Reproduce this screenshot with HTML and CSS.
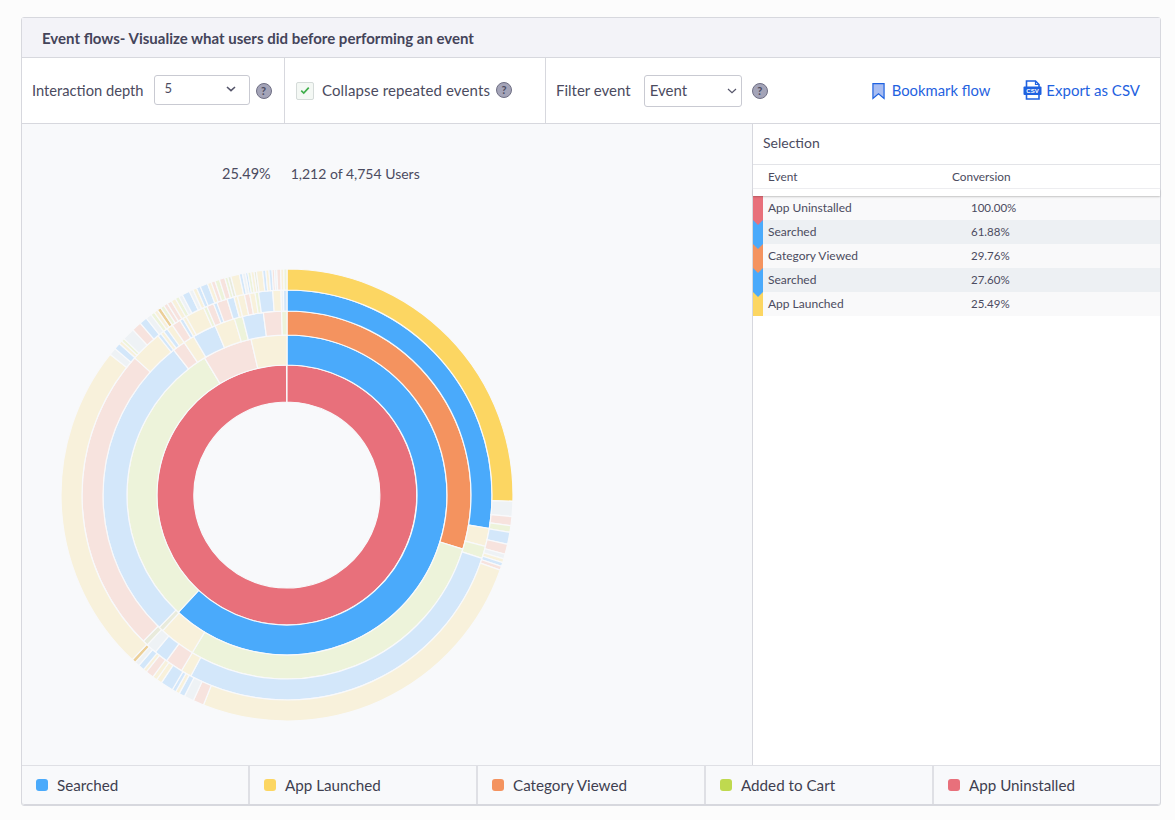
FILE: index.html
```html
<!DOCTYPE html>
<html lang="en">
<head>
<meta charset="utf-8">
<title>Event flows</title>
<link rel="stylesheet" href="styles.css">
</head>
<body>
<main class="panel">
  <h1 class="title">Event flows- Visualize what users did before performing an event</h1>
  <section class="toolbar">
    <div class="tool tool-depth">
      <span class="label label-depth">Interaction depth</span>
      <div class="select select-depth"><span class="select-value">5</span>
        <svg class="chev chev-bold" viewBox="0 0 10 6"><path d="M1 1l4 3.6L9 1"/></svg></div>
      <span class="help">?</span>
    </div>
    <div class="tool tool-collapse">
      <span class="check"><svg viewBox="0 0 12 10"><path d="M1.5 5.2l3 3L10.5 1.6"/></svg></span>
      <span class="label label-collapse">Collapse repeated events</span>
      <span class="help">?</span>
    </div>
    <div class="tool tool-filter">
      <span class="label">Filter event</span>
      <div class="select select-event"><span class="label">Event</span>
        <svg class="chev" viewBox="0 0 10 6"><path d="M1 1l4 3.6L9 1"/></svg></div>
      <span class="help">?</span>
      <span class="actions">
        <a class="action action-bookmark">
          <svg class="bookmark" viewBox="0 0 14 18"><path d="M1 1h12v16l-6-5-6 5z"/></svg>Bookmark flow</a>
        <a class="action action-export">
          <svg class="csv" viewBox="0 0 18 20">
            <path class="csv-page" d="M3 1h9l3.500 3.500V19H3z"/>
            <path class="csv-fold" d="M12 1v3.500h3.500"/>
            <rect class="csv-band" x="0" y="6.500" width="18" height="8.500" rx="1"/>
            <text class="csv-text" x="9" y="13">CSV</text>
          </svg>Export as CSV</a>
      </span>
    </div>
  </section>
  <section class="content">
    <div class="chart">
      <p class="stats"><span class="stat-pct">25.49%</span><span>1,212 of 4,754 Users</span></p>
      <svg id="sunburst" class="sunburst" viewBox="0 0 460 460" width="460" height="460"></svg>
    </div>
    <aside class="selection">
      <div class="selection-title">Selection</div>
      <div class="table-head"><span class="col-event">Event</span><span class="col-conv">Conversion</span></div>
      <div class="shadow-strip"></div>
      <ul class="rows">
        <li class="row"><i class="mark mark-red"></i><span class="col-event">App Uninstalled</span><span class="col-val">100.00%</span></li>
        <li class="row"><i class="mark mark-blue"></i><span class="col-event">Searched</span><span class="col-val">61.88%</span></li>
        <li class="row"><i class="mark mark-orange"></i><span class="col-event">Category Viewed</span><span class="col-val">29.76%</span></li>
        <li class="row"><i class="mark mark-blue"></i><span class="col-event">Searched</span><span class="col-val">27.60%</span></li>
        <li class="row"><i class="mark mark-yellow"></i><span class="col-event">App Launched</span><span class="col-val">25.49%</span></li>
      </ul>
    </aside>
  </section>
  <footer class="legend">
    <div class="legend-item"><i class="dot mark-blue"></i>Searched</div>
    <div class="legend-item"><i class="dot mark-yellow"></i>App Launched</div>
    <div class="legend-item"><i class="dot mark-orange"></i>Category Viewed</div>
    <div class="legend-item"><i class="dot mark-green"></i>Added to Cart</div>
    <div class="legend-item"><i class="dot mark-red"></i>App Uninstalled</div>
  </footer>
</main>
<script src="sunburst.js"></script>
</body>
</html>
```
FILE: styles.css
```css
* { box-sizing: border-box; }
html, body { margin: 0; }
body {
  background: #fcfcfc;
  font-family: "Lato", "Liberation Sans", sans-serif;
  color: #4b4b60;
  padding: 17px 14px 0 21px;
  height: 820px;
  overflow: hidden;
}
.panel {
  width: 1140px;
  height: 789px;
  border: 1px solid #d7d8de;
  border-radius: 3px;
  background: #fff;
  display: flex;
  flex-direction: column;
}
.title {
  margin: 0;
  height: 40px;
  padding-left: 20px;
  background: #f3f3f8;
  border-bottom: 1px solid #d7d8de;
  font-size: 15px;
  font-weight: 700;
  line-height: 41px;
  color: #44445a;
}
.toolbar {
  display: flex;
  height: 66px;
  border-bottom: 1px solid #d7d8de;
  flex: none;
}
.tool { display: flex; align-items: center; font-size: 15px; }
.tool-depth { width: 263px; padding-left: 10px; border-right: 1px solid #d7d8de; }
.tool-collapse { width: 261px; padding-left: 11px; border-right: 1px solid #d7d8de; }
.tool-filter { flex: 1; padding-left: 10px; }
.label { margin-top: -2px; }
.label-depth { font-size: 14.700px; }
.label-collapse { letter-spacing: .12px; }
.select {
  display: flex;
  align-items: center;
  justify-content: space-between;
  background: #fff;
  border: 1px solid #c9cad2;
  border-radius: 3px;
  margin-left: 10px;
  height: 30px;
}
.select-depth { width: 96px; padding: 0 13px 0 10px; font-size: 13px; margin-top: -2px; }
.select-depth .select-value { margin-top: -3px; }
.select-event { width: 98px; height: 32px; padding: 0 4px 0 5px; margin-left: 13px; }
.chev { width: 10px; height: 6px; fill: none; stroke: #55556a; stroke-width: 1.2; }
.chev-bold { stroke-width: 1.6; margin-top: -2px; }
.help {
  width: 16px;
  height: 16px;
  border-radius: 50%;
  background: #a4a4b8;
  border: 1px solid #6f6f84;
  color: #4b4b60;
  font-size: 11px;
  font-weight: 700;
  line-height: 14px;
  text-align: center;
  margin-left: 6px;
  flex: none;
}
.tool-filter .help { margin-left: 10px; }
.tool-collapse .help { margin-top: -2px; }
.check {
  width: 18px;
  height: 18px;
  margin-right: 8px;
  border: 1px solid #d5dbd9;
  border-radius: 2px;
  background: #f4f8f4;
  display: flex;
  align-items: center;
  justify-content: center;
}
.check svg { width: 10px; height: 9px; fill: none; stroke: #3fae4a; stroke-width: 2; }
.actions { margin-left: auto; display: flex; padding-right: 20px; gap: 33px; }
.action { display: flex; align-items: center; color: #1f62e0; font-size: 15px; }
.action-bookmark { margin-top: -1px; font-size: 14.800px; }
.action-export { margin-top: -1px; }
.bookmark { width: 13px; height: 18px; margin-right: 7px; margin-top: 2px; fill: #a8bdf2; stroke: #1f62e0; stroke-width: 1.300; }
.csv { width: 19px; height: 20px; margin-right: 4px; }
.csv-page { fill: #fff; stroke: #1f62e0; stroke-width: 1.600; }
.csv-fold { fill: none; stroke: #1f62e0; stroke-width: 1.200; }
.csv-band { fill: #1f62e0; }
.csv-text { fill: #fff; font-size: 6px; font-weight: 700; text-anchor: middle; font-family: "Liberation Sans", sans-serif; }
.content { display: flex; flex: 1; min-height: 0; }
.chart {
  width: 731px;
  background: #f8f9fb;
  border-right: 1px solid #d7d8de;
  flex: none;
  padding-left: 35px;
}
.stats {
  margin: 41px 0 0;
  padding-left: 165px;
  height: 18px;
  display: flex;
  gap: 20px;
  font-size: 14px;
  line-height: 18px;
}
.stat-pct { font-size: 14.500px; }
.sunburst { display: block; margin-top: 82px; }
.sunburst path { stroke: #f8f9fb; stroke-width: 1.200; }
.selection { flex: 1; display: flex; flex-direction: column; }
.selection-title {
  height: 41px;
  padding-left: 10px;
  line-height: 38px;
  font-size: 14px;
  border-bottom: 1px solid #e3e4e8;
}
.table-head {
  display: flex;
  height: 24px;
  line-height: 24px;
  font-size: 11.800px;
  border-bottom: 1px solid #f0f0f3;
}
.table-head .col-event { margin-left: 15px; width: 184px; }
.shadow-strip {
  height: 7px;
  position: relative;
  z-index: 6;
  background: #fff;
  box-shadow: 0 1px 2px rgba(0,0,0,.22);
}
.rows { list-style: none; margin: 0; padding: 0; }
.row {
  position: relative;
  display: flex;
  height: 24px;
  line-height: 24px;
  font-size: 12px;
  background: #f9f9fa;
}
.row:nth-child(even) { background: #edf0f3; }
.mark { display: block; }
.row .mark {
  width: 10px;
  height: 24px;
  margin-right: 5px;
  position: relative;
  flex: none;
}
.row:nth-child(1) { z-index: 5; }
.row:nth-child(2) { z-index: 4; }
.row:nth-child(3) { z-index: 3; }
.row:nth-child(4) { z-index: 2; }
.row:nth-child(5) { z-index: 1; }
.row:not(:last-child) .mark::after {
  content: "";
  position: absolute;
  left: 0;
  top: 24px;
  border-left: 5px solid transparent;
  border-right: 5px solid transparent;
  border-top: 5px solid var(--mark);
}
.mark-red { background: #e8707b; --mark: #e8707b; }
.mark-blue { background: #4aaafb; --mark: #4aaafb; }
.mark-orange { background: #f4935f; --mark: #f4935f; }
.mark-yellow { background: #fcd662; --mark: #fcd662; }
.mark-green { background: #bfd94f; --mark: #bfd94f; }
.row .col-event { width: 203px; }
.col-val { font-size: 11.500px; }
.legend {
  display: flex;
  height: 40px;
  flex: none;
  background: #f8f9fb;
  border-top: 1px solid #dfe0e5;
  border-bottom: 1px solid #d7d8de;
  border-radius: 0 0 3px 3px;
}
.legend-item {
  flex: 0 0 228px;
  display: flex;
  align-items: center;
  padding-left: 14px;
  font-size: 15.200px;
  color: #3f3f50;
  border-right: 2px solid #dfe0e5;
}
.legend-item:last-child { border-right: 0; flex: 1 1 0; }
.dot { width: 12px; height: 12px; border-radius: 3px; margin-right: 9px; }
```
FILE: sunburst.js
```js
(function () {
  var C = { R: '#e8707b', B: '#4aaafb', O: '#f4935f', A: '#fcd662',
            y: '#f8f1db', p: '#f7e3de', b: '#d3e7fa', g: '#edf3da', s: '#eef2f5', t: '#eccf97', h: '#e9ebdc' };
  // Each ring: inner radius, outer radius, then a list of [end angle, colour], clockwise from 12 o'clock.
  var rings = [
    [93, 130, [[360, 'R']]],
    [130, 160, [[222.8, 'B'], [329, 'g'], [347, 'p'], [360, 'y']]],
    [160, 184, [[107.1, 'O'], [211, 'g'], [222.5, 'y'], [224, 'h'], [322, 'b'], [326, 'p'], [329.5, 'y'], [337, 'b'], [343.4, 'y'], [346, 'g'], [352.6, 'b'], [358.3, 'p'], [360, 'g']]],
    [184, 205, [[99.4, 'B'], [104.5, 'y'], [108, 'g'], [208, 'b'], [211, 'y'], [216, 'p'], [220, 'b'], [223, 's'], [224.5, 'h'],
      [312, 'p'], [321, 'y'], [322, 'b'], [323, 'y'], [324.2, 'b'], [326, 'y'], [328.5, 'p'], [329.5, 'b'], [330.5, 'y'], [336, 'y'], [337, 'g'],
      [339, 'p'], [340, 'b'], [343, 'p'], [345, 'b'], [346, 'y'], [348, 'y'], [349.5, 'p'], [351, 'y'], [352, 'g'], [356, 'b'], [358.3, 'y'], [359, 's'], [360, 'b']]],
    [205, 226, [[91.6, 'A'], [95.5, 's'], [97.8, 'p'], [99.5, 'g'], [102.6, 'b'], [105.2, 'p'], [106.4, 's'], [107.4, 'y'], [108.4, 'b'], [109.4, 'p'],
      [201.7, 'y'], [204.5, 'p'], [207, 's'], [208.5, 'b'], [209.5, 'y'], [210.5, 'b'], [213.8, 'b'], [215.2, 'y'], [216.4, 'y'], [218.5, 'p'], [219.4, 'y'], [221, 'b'],
      [222.2, 's'], [223.2, 't'], [308.5, 'y'], [310.4, 's'], [312.1, 'b'], [313, 'y'], [313.8, 'g'], [317, 's'], [319.5, 'p'], [321.5, 'b'], [323, 's'],
      [324, 'g'], [325, 'y'], [326, 't'], [327, 'g'], [328, 'p'], [329.2, 'p'], [330.4, 'y'], [331.4, 'g'], [332.4, 's'], [334.4, 'b'], [335.4, 's'], [336.4, 'y'], [337.4, 'b'],
      [339.4, 'b'], [340.4, 'y'], [341.4, 'p'], [342.6, 'g'], [344, 'p'], [344.8, 'g'], [345.6, 'h'], [347.8, 'y'], [348.6, 'b'], [349.4, 's'], [350, 'b'], [350.8, 'g'],
      [351.6, 'y'], [352.2, 'h'], [353.8, 'y'], [354.6, 'b'], [355.4, 'y'], [356.2, 'b'], [356.8, 'p'], [357.4, 's'], [358.4, 'p'], [359.2, 'y'], [360, 'g']]]
  ];
  var cx = 230, cy = 230;
  var svg = document.getElementById('sunburst');
  function pt(r, a) {
    var t = a * Math.PI / 180;
    return (cx + r * Math.sin(t)).toFixed(2) + ' ' + (cy - r * Math.cos(t)).toFixed(2);
  }
  function arc(r0, r1, a0, a1) {
    if (a1 - a0 >= 360) a1 = a0 + 359.8;
    var large = a1 - a0 > 180 ? 1 : 0;
    return 'M' + pt(r0, a0) + 'A' + r0 + ' ' + r0 + ' 0 ' + large + ' 1 ' + pt(r0, a1) +
      'L' + pt(r1, a1) + 'A' + r1 + ' ' + r1 + ' 0 ' + large + ' 0 ' + pt(r1, a0) + 'Z';
  }
  rings.forEach(function (ring) {
    var start = 0;
    ring[2].forEach(function (seg) {
      var p = document.createElementNS('http://www.w3.org/2000/svg', 'path');
      p.setAttribute('d', arc(ring[0], ring[1], start, seg[0]));
      p.setAttribute('fill', C[seg[1]]);
      svg.appendChild(p);
      start = seg[0];
    });
  });
})();
```
